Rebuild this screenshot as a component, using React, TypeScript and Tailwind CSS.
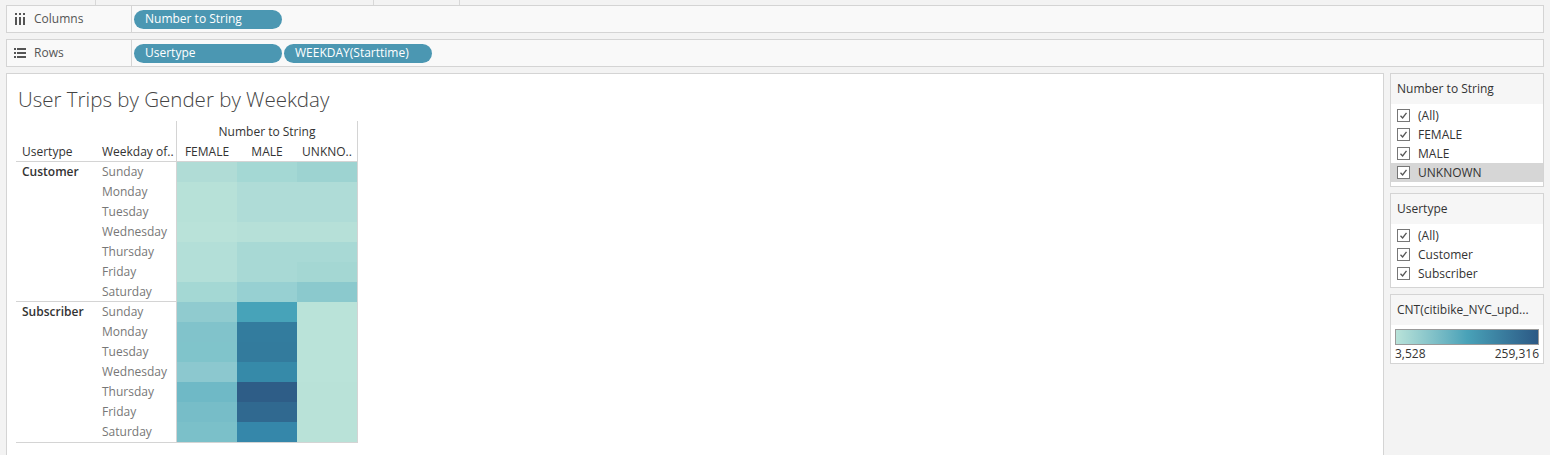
import React from "react";

const font = "font-['Open_Sans',_'Noto_Sans',_sans-serif]";

type Row = { day: string; cells: string[] };

const customer: Row[] = [
  { day: "Sunday", cells: ["#b0dcd6", "#a4d8d4", "#9dd3d1"] },
  { day: "Monday", cells: ["#b7e1d8", "#afdcd7", "#afdcd7"] },
  { day: "Tuesday", cells: ["#b7e1d8", "#afdcd7", "#afdcd7"] },
  { day: "Wednesday", cells: ["#b9e2d9", "#b6e0d8", "#b6e0d8"] },
  { day: "Thursday", cells: ["#b3dfd8", "#a8d9d5", "#a8d9d5"] },
  { day: "Friday", cells: ["#b3dfd8", "#a8d9d5", "#a4d7d3"] },
  { day: "Saturday", cells: ["#a4d8d4", "#97d0d2", "#8bc9cd"] },
];

const subscriber: Row[] = [
  { day: "Sunday", cells: ["#90cbcf", "#47a3b9", "#bae3d9"] },
  { day: "Monday", cells: ["#81c3cb", "#337c9e", "#bae3d9"] },
  { day: "Tuesday", cells: ["#80c4cb", "#337b9d", "#bae3d9"] },
  { day: "Wednesday", cells: ["#8cc8cf", "#368aa9", "#bae3d9"] },
  { day: "Thursday", cells: ["#6fb9c6", "#2e5d87", "#b9e2d8"] },
  { day: "Friday", cells: ["#77bdc8", "#306990", "#b9e2d8"] },
  { day: "Saturday", cells: ["#7bc0c9", "#3587aa", "#b9e2d8"] },
];

function ColumnsIcon() {
  return (
    <svg width="12" height="12" viewBox="0 0 12 12" className="shrink-0">
      <rect x="1" y="0" width="2" height="2" fill="#555" />
      <rect x="5" y="0" width="2" height="2" fill="#555" />
      <rect x="9" y="0" width="2" height="2" fill="#555" />
      <rect x="1" y="4" width="2" height="8" fill="#555" />
      <rect x="5" y="4" width="2" height="8" fill="#555" />
      <rect x="9" y="4" width="2" height="8" fill="#555" />
    </svg>
  );
}

function RowsIcon() {
  return (
    <svg width="12" height="10" viewBox="0 0 12 10" className="shrink-0">
      <rect x="0" y="0" width="2" height="2" fill="#555" />
      <rect x="3" y="0" width="9" height="2" fill="#555" />
      <rect x="0" y="4" width="2" height="2" fill="#555" />
      <rect x="3" y="4" width="9" height="2" fill="#555" />
      <rect x="0" y="8" width="2" height="2" fill="#555" />
      <rect x="3" y="8" width="9" height="2" fill="#555" />
    </svg>
  );
}

function Pill({ label }: { label: string }) {
  return (
    <div className="h-[19px] w-[148px] rounded-full bg-[#4b97b2] text-white text-[12px] pl-[11px] flex items-center leading-none">
      {label}
    </div>
  );
}

function Shelf({ icon, label, pills }: { icon: React.ReactNode; label: string; pills: string[] }) {
  return (
    <div className="h-[28px] border border-[#d4d4d4] bg-[#f9f9f9] flex">
      <div className="w-[125px] border-r border-[#d4d4d4] flex items-center gap-[8px] pl-[7px] text-[12px] text-[#555]">
        {icon}
        <span>{label}</span>
      </div>
      <div className="flex items-center gap-[2px] pl-[2px]">
        {pills.map((p) => (
          <Pill key={p} label={p} />
        ))}
      </div>
    </div>
  );
}

function Check() {
  return (
    <div className="w-[13px] h-[13px] border border-[#777] bg-white flex items-center justify-center shrink-0">
      <svg width="9" height="9" viewBox="0 0 9 9">
        <path d="M1.5 4.8 L3.6 7 L7.5 1.8" stroke="#555" strokeWidth="1.3" fill="none" />
      </svg>
    </div>
  );
}

function FilterCard({ title, items, highlight }: { title: string; items: string[]; highlight?: string }) {
  return (
    <div className="border border-[#d4d4d4] bg-white">
      <div className="h-[30px] bg-[#f6f6f6] flex items-center pl-[6px] text-[12px] text-[#333]">{title}</div>
      <div className="pt-[2px] pb-[4px]">
        {items.map((it) => (
          <div
            key={it}
            className={`h-[19px] flex items-center gap-[8px] pl-[6px] text-[12px] text-[#333] ${
              it === highlight ? "bg-[#d6d6d6]" : ""
            }`}
          >
            <Check />
            <span>{it}</span>
          </div>
        ))}
      </div>
    </div>
  );
}

function Group({ name, rows, last }: { name: string; rows: Row[]; last?: boolean }) {
  return (
    <div className={`flex ${last ? "border-b border-[#d4d4d4]" : ""}`}>
      <div className="w-[86px] pl-[6px] h-[20px] flex items-center text-[12px] font-semibold text-[#333]">{name}</div>
      <div className="flex flex-col">
        {rows.map((r) => (
          <div key={r.day} className="flex h-[20px]">
            <div className="w-[75px] border-r border-[#d4d4d4] flex items-center text-[12px] text-[#777]">{r.day}</div>
            {r.cells.map((c, i) => (
              <div key={i} className="w-[60px] h-[20px]" style={{ backgroundColor: c }} />
            ))}
          </div>
        ))}
      </div>
    </div>
  );
}

export default function App() {
  return (
    <div className={`${font} w-[1550px] h-[455px] overflow-hidden bg-[#f3f3f3] flex flex-col`}>
      {/* top strip */}
      <div className="h-[5px] flex shrink-0">
        <div className="w-[96px] border-r border-[#d8d8d8]" />
        <div className="w-[278px] border-r border-[#d8d8d8]" />
        <div className="w-[86px] border-r border-[#d8d8d8]" />
      </div>

      <div className="px-[6px] flex flex-col gap-[6px] shrink-0">
        <Shelf icon={<ColumnsIcon />} label="Columns" pills={["Number to String"]} />
        <Shelf icon={<RowsIcon />} label="Rows" pills={["Usertype", "WEEKDAY(Starttime)"]} />
      </div>

      <div className="flex gap-[6px] px-[6px] pt-[6px] flex-1 min-h-0">
        {/* main view */}
        <div className="w-[1378px] bg-white border-t border-x border-[#d4d4d4] pl-[9px] pt-[11px]">
          <div className="h-[28px] pl-[2px] text-[20.5px] font-light text-[#444] leading-[28px] whitespace-nowrap">
            User Trips by Gender by Weekday
          </div>
          <div className="mt-[8px] w-[342px]">
            <div className="flex">
              <div className="w-[160px] h-[40px] flex items-end">
                <div className="w-[86px] pl-[6px] text-[12px] text-[#333]">Usertype</div>
                <div className="w-[74px] text-[12px] text-[#333] whitespace-nowrap">Weekday of..</div>
              </div>
              <div className="w-[182px] h-[40px] border-x border-[#d4d4d4] flex flex-col">
                <div className="h-[20px] flex items-center justify-center text-[12px] text-[#333] pt-[1px]">Number to String</div>
                <div className="h-[20px] flex items-end text-[12px] text-[#333]">
                  <div className="w-[60px] text-center">FEMALE</div>
                  <div className="w-[60px] text-center">MALE</div>
                  <div className="w-[60px] text-center">UNKNO..</div>
                </div>
              </div>
            </div>
            <div className="border-t border-r border-[#d4d4d4]">
              <Group name="Customer" rows={customer} />
              <div className="h-px w-[161px] bg-[#d4d4d4] -mt-px relative" />
              <Group name="Subscriber" rows={subscriber} last />
            </div>
          </div>
        </div>

        {/* right panel */}
        <div className="w-[154px] flex flex-col gap-[6px]">
          <FilterCard
            title="Number to String"
            items={["(All)", "FEMALE", "MALE", "UNKNOWN"]}
            highlight="UNKNOWN"
          />
          <FilterCard title="Usertype" items={["(All)", "Customer", "Subscriber"]} />
          <div className="border border-[#d4d4d4] bg-white">
            <div className="h-[30px] bg-[#f6f6f6] flex items-center pl-[6px] text-[12px] text-[#333] whitespace-nowrap">
              CNT(citibike_NYC_upd...
            </div>
            <div className="px-[4px] pt-[4px]">
              <div className="h-[16px] border border-[#9a9a9a] bg-gradient-to-r from-[#b9e3d9] via-[#49a2b8] to-[#2c5985]" />
              <div className="flex justify-between text-[12px] text-[#333] h-[18px] items-center">
                <span>3,528</span>
                <span>259,316</span>
              </div>
            </div>
          </div>
        </div>
      </div>
    </div>
  );
}
